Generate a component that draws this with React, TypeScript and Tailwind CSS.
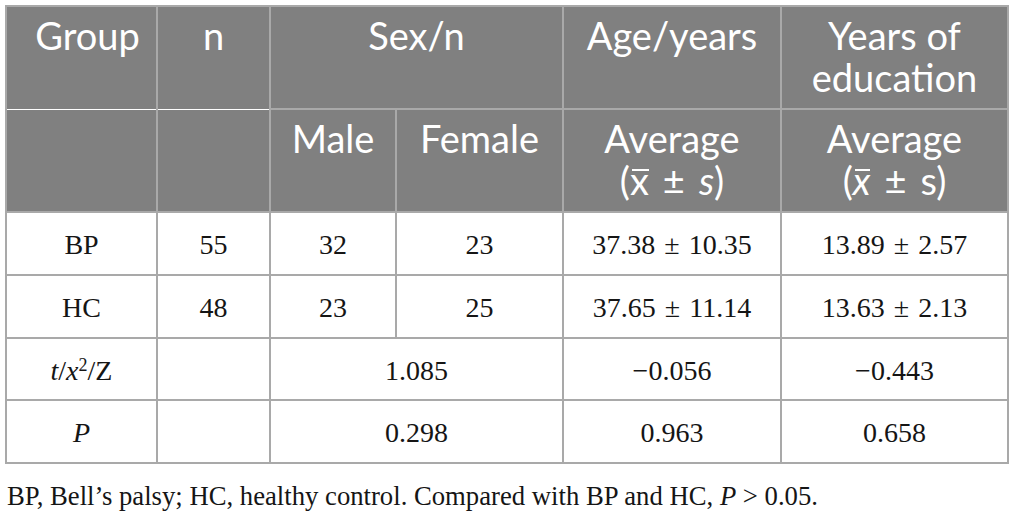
import React from 'react';

const head = "bg-[#808080] text-white align-top text-center border-2 border-[#a9a9a9] px-1 pt-[7px] font-['Lato','Open_Sans',sans-serif] text-[38px] leading-[42px] font-normal";
const cell = "text-center align-middle border-2 border-[#a9a9a9] text-[28px] text-[#151515] pt-[3px]";

function Xbar({ italic }: { italic?: boolean }) {
  return (
    <span className={italic ? 'relative italic' : 'relative'}>
      x
      <span className="absolute left-[2px] right-0 top-[12px] h-[2px] bg-white" />
    </span>
  );
}

function Pm() {
  return <span className="mx-[14px]">±</span>;
}

function Val({ a, b }: { a: string; b: string }) {
  return (
    <>
      {a}
      <span className="mx-[9px]">±</span>
      {b}
    </>
  );
}

export default function App() {
  const rows = [
    { g: 'BP', n: '55', m: '32', f: '23', age: ['37.38', '10.35'], edu: ['13.89', '2.57'] },
    { g: 'HC', n: '48', m: '23', f: '25', age: ['37.65', '11.14'], edu: ['13.63', '2.13'] },
  ];

  return (
    <div className="w-[1014px] h-[516px] bg-white pt-[5px] pl-[5px] font-['Liberation_Serif',serif]">
      <table className="border-collapse table-fixed w-[1004px] border-2 border-[#a9a9a9]">
        <colgroup>
          <col className="w-[151px]" />
          <col className="w-[113px]" />
          <col className="w-[126px]" />
          <col className="w-[167px]" />
          <col className="w-[218px]" />
          <col className="w-[227px]" />
        </colgroup>
        <thead>
          <tr className="h-[103px]">
            <th className={head + ' pl-[16px] border-b-white border-b'}>Group</th>
            <th className={head + ' border-b-white border-b'}>n</th>
            <th className={head} colSpan={2}>Sex/n</th>
            <th className={head}>Age/years</th>
            <th className={head}>Years of education</th>
          </tr>
          <tr className="h-[103px]">
            <th className={head + ' border-t-white border-t'}></th>
            <th className={head + ' border-t-white border-t'}></th>
            <th className={head}>Male</th>
            <th className={head}>Female</th>
            <th className={head}>
              Average
              <br />
              (<Xbar />
              <Pm />
              <span className="italic">s</span>)
            </th>
            <th className={head}>
              Average
              <br />
              (<Xbar italic />
              <Pm />
              s)
            </th>
          </tr>
        </thead>
        <tbody>
          {rows.map((r) => (
            <tr key={r.g} className="h-[63px]">
              <td className={cell}>{r.g}</td>
              <td className={cell}>{r.n}</td>
              <td className={cell}>{r.m}</td>
              <td className={cell}>{r.f}</td>
              <td className={cell}>
                <Val a={r.age[0]} b={r.age[1]} />
              </td>
              <td className={cell}>
                <Val a={r.edu[0]} b={r.edu[1]} />
              </td>
            </tr>
          ))}
          <tr className="h-[62px]">
            <td className={cell}>
              <span className="italic">t</span>/<span className="italic">x</span>
              <sup className="text-[18px]">2</sup>/Z
            </td>
            <td className={cell}></td>
            <td className={cell} colSpan={2}>1.085</td>
            <td className={cell}>−0.056</td>
            <td className={cell}>−0.443</td>
          </tr>
          <tr className="h-[63px]">
            <td className={cell}>
              <span className="italic">P</span>
            </td>
            <td className={cell}></td>
            <td className={cell} colSpan={2}>0.298</td>
            <td className={cell}>0.963</td>
            <td className={cell}>0.658</td>
          </tr>
        </tbody>
      </table>
      <p className="mt-[16px] ml-[2px] text-[26.7px] leading-[32px] text-[#151515]">
        BP, Bell’s palsy; HC, healthy control. Compared with BP and HC, <span className="italic">P</span> &gt; 0.05.
      </p>
    </div>
  );
}
